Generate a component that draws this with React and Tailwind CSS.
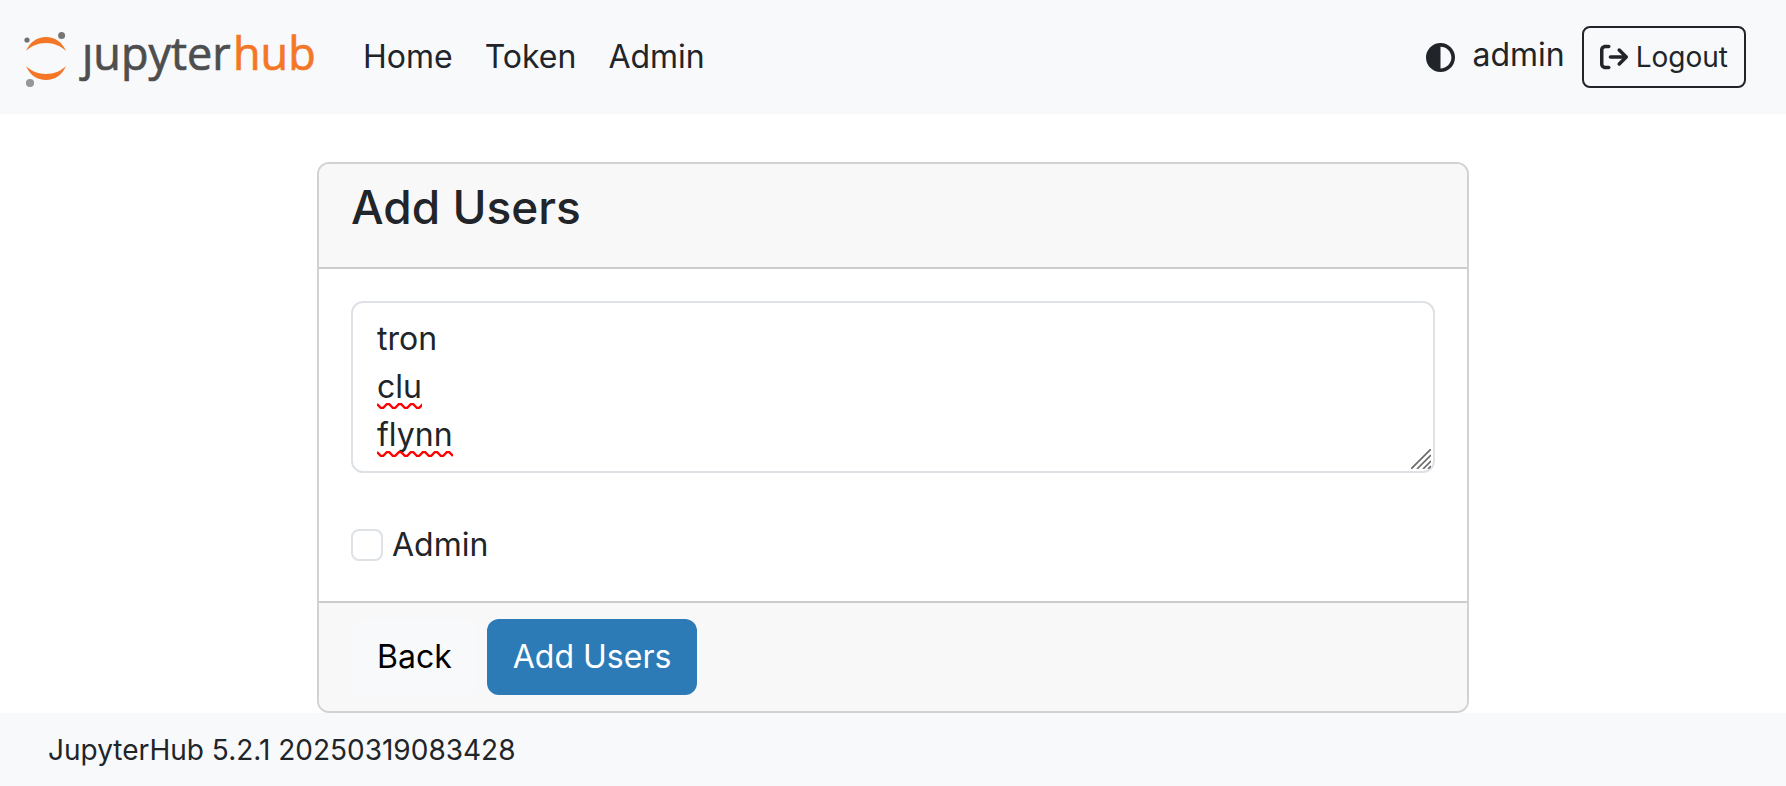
import { useState } from "react";
import { FaArrowRightFromBracket, FaCircleHalfStroke } from "react-icons/fa6";

const Logo = () => {
  return (
    <svg
      viewBox="0 0 291 62"
      className="h-[62px] w-[291px] overflow-visible"
      role="img"
      aria-label="JupyterHub logo"
    >
      <path d="M2 25C6 16 13 11 22 11s16 5 20 14c-5-5-12-8-20-8S7 20 2 25Z" fill="#f37726" />
      <path d="M2 40c4 9 11 14 20 14s16-5 20-14c-5 5-12 8-20 8S7 45 2 40Z" fill="#f37726" />
      <circle cx="3" cy="14" r="2.6" fill="#6f7070" />
      <circle cx="37.6" cy="9.6" r="3.5" fill="#767677" />
      <circle cx="6" cy="57" r="4.1" fill="#989798" />
      <g fontFamily="'Open Sans', 'Noto Sans', sans-serif" fontSize="45" strokeWidth="0.7">
        <text x="58" y="44" fill="#4e4e4e" stroke="#4e4e4e">
          ȷupyter
        </text>
        <text x="209" y="44" fill="#f37726" stroke="#f37726">
          hub
        </text>
      </g>
    </svg>
  );
};

const Navbar = () => {
  return (
    <nav className="flex items-center bg-[#f8f9fb] py-[26px] pl-6 pr-10">
      <a href="#home" className="mr-8">
        <Logo />
      </a>

      <ul className="flex">
        <li>
          <a href="#home" className="px-4">
            Home
          </a>
        </li>
        <li>
          <a href="#token" className="px-4">
            Token
          </a>
        </li>
        <li>
          <a href="#admin" className="px-4">
            Admin
          </a>
        </li>
      </ul>

      <div className="ml-auto flex items-center">
        <button type="button" aria-label="Toggle dark mode" className="mr-[17px]">
          <FaCircleHalfStroke className="size-[29px]" />
        </button>
        <span className="mr-[17px] pb-1">admin</span>
        <a
          href="#logout"
          className="flex items-center gap-2 rounded-lg border-2 border-[#212529] px-4 py-2 text-[28px] leading-[42px]"
        >
          <FaArrowRightFromBracket className="size-7" />
          Logout
        </a>
      </div>
    </nav>
  );
};

// red zigzag under a misspelled word
const Squiggle = ({ width, className }) => {
  return (
    <svg width={width} height="6" className={className} aria-hidden="true">
      <path
        d="M0 1l4 4h2l4-4h2l4 4h2l4-4h2l4 4h2l4-4h2l4 4h2l4-4h2l4 4h2l4-4h2l4 4h2l4-4h2l4 4"
        fill="none"
        stroke="#ff0000"
        strokeWidth="2.4"
      />
    </svg>
  );
};

const AddUsers = () => {
  const [users, setUsers] = useState("tron\nclu\nflynn");
  const [admin, setAdmin] = useState(false);

  return (
    <form
      onSubmit={(e) => e.preventDefault()}
      className="mx-auto w-full max-w-[1152px] overflow-hidden rounded-xl border-2 border-black/[0.175]"
    >
      <div className="border-b-2 border-black/[0.175] bg-[#f8f8f8] px-8 pb-8 pt-4">
        <h1 className="text-[46px] font-medium leading-[55px]">Add Users</h1>
      </div>

      <div className="p-8">
        <div className="relative mb-12">
          <textarea
            className="block w-full resize-none rounded-xl border-2 border-[#dee2e6] bg-white px-6 py-3"
            rows="3"
            spellCheck="false"
            aria-label="Usernames, one per line"
            value={users}
            onChange={(e) => setUsers(e.target.value)}
          />
          <Squiggle width={45} className="pointer-events-none absolute left-[26px] top-[102px]" />
          <Squiggle width={76} className="pointer-events-none absolute left-[26px] top-[150px]" />
          <svg
            viewBox="0 0 20 20"
            className="pointer-events-none absolute bottom-1 right-1 size-5"
            aria-hidden="true"
          >
            <path d="M0 20L20 0M6 20L20 6M12 20l8-8M17 20l3-3" stroke="#6b6b6b" strokeWidth="1.7" />
          </svg>
        </div>

        <label className="flex items-center gap-[9px]">
          <input
            type="checkbox"
            className="size-8 appearance-none rounded-lg border-2 border-[#dee2e6] bg-white checked:bg-[#2c7bb6]"
            checked={admin}
            onChange={(e) => setAdmin(e.target.checked)}
          />
          Admin
        </label>
      </div>

      <div className="flex gap-[9px] border-t-2 border-black/[0.175] bg-[#f8f8f8] px-8 py-4">
        <button type="button" className="rounded-xl bg-[#f8f9fb] px-[26px] py-3.5 text-black">
          Back
        </button>
        <button type="submit" className="rounded-xl bg-[#2c7bb6] px-[26px] py-3.5 text-white">
          Add Users
        </button>
      </div>
    </form>
  );
};

const App = () => {
  return (
    <div className="flex min-h-screen flex-col bg-white font-[Inter,sans-serif] text-[32px] leading-[48px] text-[#212529]">
      <Navbar />
      <main className="pt-12">
        <AddUsers />
      </main>
      <footer className="grow bg-[#f8f9fb] px-12 pb-3 pt-4 text-[28px] leading-[42px]">
        JupyterHub 5.2.1 20250319083428
      </footer>
    </div>
  );
};

export default App;
